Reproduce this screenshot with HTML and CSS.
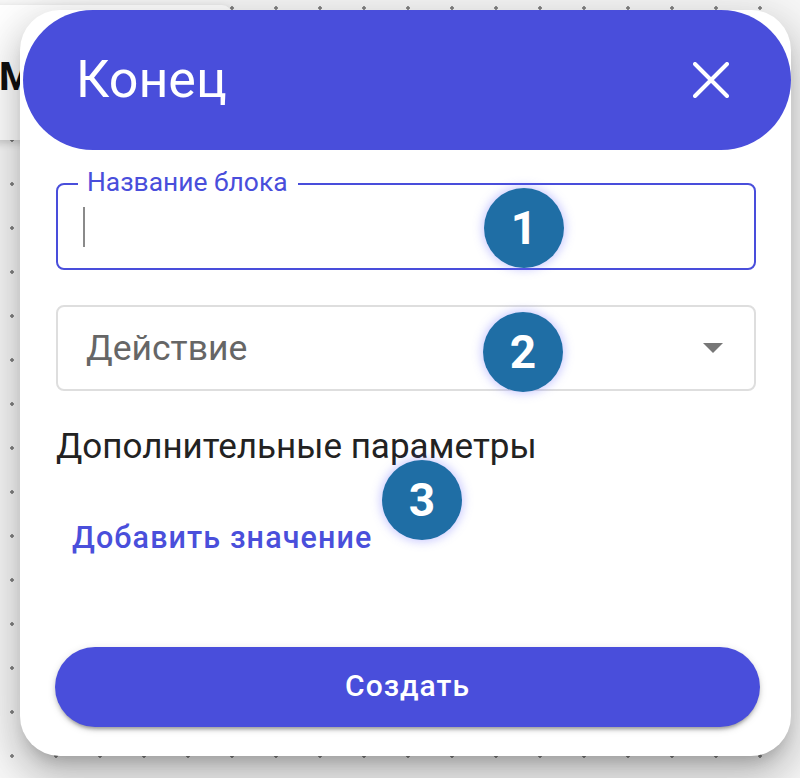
FILE: index.html
```html
<!DOCTYPE html>
<html lang="ru">
<head>
<meta charset="utf-8">
<title>Конец</title>
<link rel="stylesheet" href="styles.css">
</head>
<body>
<div class="canvas">
  <div class="node"><span class="node-title">М</span></div>
  <div class="dialog">
    <header class="dlg-head">
      <h2 class="dlg-title">Конец</h2>
      <button class="close" aria-label="Закрыть">
        <svg viewBox="0 0 36 36" width="36" height="36"><path d="M2 2 L34 34 M34 2 L2 34" stroke="#fff" stroke-width="4" stroke-linecap="round" fill="none"/></svg>
      </button>
    </header>
    <div class="dlg-body">
      <div class="field">
        <span class="field-label">Название блока</span>
        <span class="caret"></span>
      </div>
      <div class="select">
        <span class="select-value">Действие</span>
        <svg class="arrow" viewBox="0 0 20 10" width="20" height="10"><path d="M0 0 L20 0 L10 10 Z" fill="#777"/></svg>
      </div>
      <div class="extra">Дополнительные параметры</div>
      <button class="link">Добавить значение</button>
      <div class="spacer"></div>
      <button class="primary">Создать</button>
    </div>
    <span class="badge b1">1</span>
    <span class="badge b2">2</span>
    <span class="badge b3">3</span>
  </div>
</div>
</body>
</html>
```
FILE: styles.css
```css
html, body {
  margin: 0;
  padding: 0;
}
body {
  width: 800px;
  height: 778px;
  overflow: hidden;
  font-family: Roboto, "Noto Sans", sans-serif;
  background-color: #f7f7f7;
  background-image: radial-gradient(circle, #808080 1.5px, transparent 2px);
  background-size: 44px 44px;
  background-position: -10px -14px;
}
.canvas {
  position: relative;
  width: 800px;
  height: 778px;
}
.node {
  position: absolute;
  left: -200px;
  top: 5px;
  width: 432px;
  height: 135px;
  background: #fff;
  border-radius: 10px;
  box-shadow: 0 3px 8px rgba(0,0,0,0.18);
  display: flex;
  align-items: center;
  padding-top: 8px;
  box-sizing: border-box;
}
.node-title {
  margin-left: 199px;
  font-weight: 700;
  font-size: 39px;
  color: #111;
}
.dialog {
  position: absolute;
  left: 20px;
  top: 10px;
  width: 771px;
  height: 746px;
  box-sizing: border-box;
  background: #fff;
  border-radius: 40px;
  display: flex;
  flex-direction: column;
  box-shadow: 0 11px 15px -7px rgba(0,0,0,0.2), 0 24px 38px 3px rgba(0,0,0,0.14), 0 9px 46px 8px rgba(0,0,0,0.12);
}
.dlg-head {
  height: 140px;
  margin-left: 3px;
  border-radius: 70px;
  background: #494edb;
  display: flex;
  align-items: center;
  justify-content: space-between;
  padding: 0 62px 0 53px;
  flex-shrink: 0;
}
.dlg-title {
  margin: 0;
  font-weight: 400;
  font-size: 52px;
  color: #fff;
  line-height: 1;
}
.close {
  border: 0;
  background: none;
  padding: 0;
  width: 36px;
  height: 36px;
  display: block;
}
.close svg { display: block; }
.dlg-body {
  flex: 1;
  display: flex;
  flex-direction: column;
  padding: 33px 35px 29px 36px;
}
.field {
  position: relative;
  height: 87px;
  box-sizing: border-box;
  border: 2.5px solid #494edb;
  border-radius: 8px;
  display: flex;
  align-items: center;
  padding-left: 25px;
}
.field-label {
  position: absolute;
  left: 20px;
  top: -18px;
  padding: 0 10px 0 9px;
  background: #fff;
  color: #494edb;
  font-size: 26.4px;
  line-height: 30px;
}
.caret {
  width: 2px;
  height: 40px;
  background: #8a8a8a;
}
.select {
  margin-top: 35px;
  height: 86px;
  box-sizing: border-box;
  border: 2px solid #dedede;
  border-radius: 8px;
  display: flex;
  align-items: center;
  justify-content: space-between;
  padding: 0 31px 0 28px;
}
.select-value {
  font-size: 35.5px;
  color: #666;
}
.arrow { display: block; }
.extra {
  margin-top: 34px;
  font-size: 35px;
  color: #222;
  line-height: 44px;
}
.link {
  align-self: flex-start;
  margin-top: 52px;
  margin-left: 16px;
  padding: 0;
  border: 0;
  background: none;
  font-family: inherit;
  font-weight: 500;
  font-size: 30.5px;
  letter-spacing: 1.1px;
  color: #4a4fdb;
  line-height: 34px;
}
.spacer { flex: 1; }
.primary {
  height: 80px;
  border: 0;
  border-radius: 40px;
  background: #494edb;
  color: #fff;
  font-family: inherit;
  font-weight: 500;
  font-size: 30px;
  letter-spacing: 1px;
  padding-bottom: 4px;
  margin-right: -4px;
  margin-left: -1px;
  box-shadow: 0 5px 3px -3px rgba(0,0,0,0.2), 0 3px 4px rgba(0,0,0,0.14), 0 2px 9px rgba(0,0,0,0.12);
}
.badge {
  position: absolute;
  width: 80px;
  height: 80px;
  border-radius: 50%;
  background: #1f6ea5;
  color: #fff;
  font-weight: 700;
  font-size: 46px;
  display: flex;
  align-items: center;
  justify-content: center;
  box-shadow: 0 0 10px 2px rgba(110,110,255,0.35);
}
.b1 { left: 464px; top: 178px; }
.b2 { left: 463px; top: 302px; }
.b3 { left: 362px; top: 450px; }
```
